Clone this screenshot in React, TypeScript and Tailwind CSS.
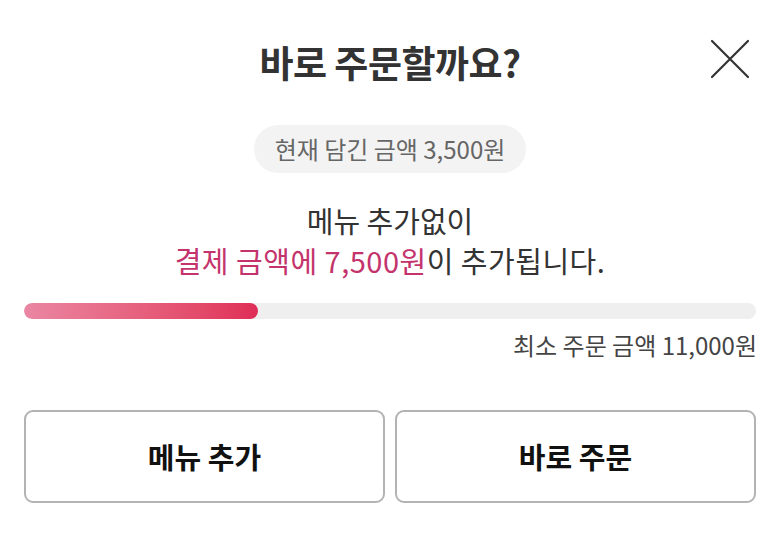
import React from "react";

export default function App() {
  const font = { fontFamily: '"Noto Sans CJK KR", "Noto Sans", sans-serif' };
  return (
    <div className="w-[780px] h-[555px] bg-white flex flex-col relative overflow-hidden" style={font}>
      <div className="pt-[37px] flex justify-center">
        <h1 className="text-[37px] leading-[50px] font-bold text-[#333333] tracking-[-0.5px]">바로 주문할까요?</h1>
      </div>
      <button className="absolute left-[710px] top-[39px] w-[40px] h-[40px]" aria-label="close">
        <svg width="40" height="40" viewBox="0 0 40 40">
          <path d="M2 2 L38 38 M38 2 L2 38" stroke="#333" strokeWidth="2.2" strokeLinecap="round" />
        </svg>
      </button>
      <div className="mt-[38px] flex justify-center">
        <div className="h-[48px] px-[21px] rounded-full bg-[#f3f3f3] flex items-center text-[24px] text-[#666666]">
          현재 담긴 금액 3,500원
        </div>
      </div>
      <div className="mt-[27px] flex flex-col items-center text-[29px] leading-[40px] text-[#333333]">
        <div>메뉴 추가없이</div>
        <div className="tracking-[0.5px]">
          <span className="text-[#c4336c]">결제 금액에 7,500원</span>이 추가됩니다.
        </div>
      </div>
      <div className="mt-[23px] mx-[24px] h-[16px] rounded-full bg-[#efefef] overflow-hidden">
        <div className="h-full w-[234px] rounded-full bg-gradient-to-r from-[#ea86a3] to-[#df2d57]" />
      </div>
      <div className="mt-[12px] px-[23px] flex justify-end text-[24px] leading-[28px] text-[#444444]">
        최소 주문 금액 11,000원
      </div>
      <div className="mt-[51px] px-[24px] flex gap-[10px]">
        <button className="flex-1 h-[93px] rounded-[9px] border-2 border-[#b3b3b3] bg-white text-[29px] font-bold text-[#111111]">
          메뉴 추가
        </button>
        <button className="flex-1 h-[93px] rounded-[9px] border-2 border-[#b3b3b3] bg-white text-[29px] font-bold text-[#111111]">
          바로 주문
        </button>
      </div>
    </div>
  );
}
